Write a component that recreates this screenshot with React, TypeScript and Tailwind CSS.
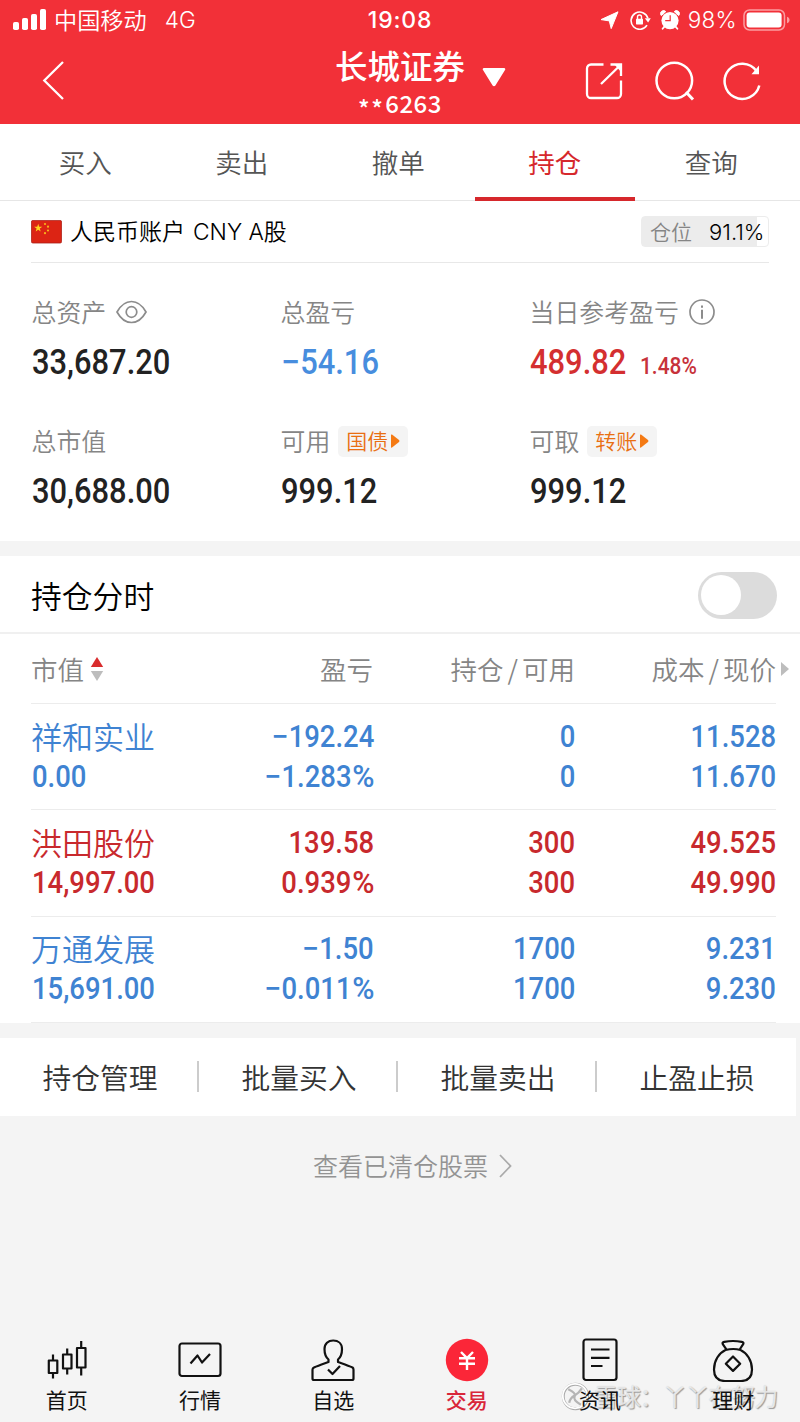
import React from "react";

const CJK = "font-['Noto_Sans_CJK_SC',sans-serif]";
const NUM = "inline-block whitespace-nowrap font-['Roboto',sans-serif] font-medium";

type Tone = "blue" | "red";

interface Holding {
  name: string;
  value: string;
  profit: string;
  rate: string;
  held: string;
  usable: string;
  cost: string;
  price: string;
  tone: Tone;
}

const holdings: Holding[] = [
  { name: "祥和实业", value: "0.00", profit: "−192.24", rate: "−1.283%", held: "0", usable: "0", cost: "11.528", price: "11.670", tone: "blue" },
  { name: "洪田股份", value: "14,997.00", profit: "139.58", rate: "0.939%", held: "300", usable: "300", cost: "49.525", price: "49.990", tone: "red" },
  { name: "万通发展", value: "15,691.00", profit: "−1.50", rate: "−0.011%", held: "1700", usable: "1700", cost: "9.231", price: "9.230", tone: "blue" },
];

const tabs = ["买入", "卖出", "撤单", "持仓", "查询"];
const actions = ["持仓管理", "批量买入", "批量卖出", "止盈止损"];

function StatusBar() {
  return (
    <div className="grid h-10 grid-cols-[1fr_auto_1fr] items-center text-white">
      <div className="flex items-center pl-[13px]">
        <svg width="33" height="21" viewBox="0 0 33 21" fill="currentColor" className="-translate-y-px">
          <rect x="0" y="13" width="6" height="8" rx="1.8" />
          <rect x="9" y="9" width="6" height="12" rx="1.8" />
          <rect x="18" y="5" width="6" height="16" rx="1.8" />
          <rect x="27" y="0" width="6" height="21" rx="1.8" />
        </svg>
        <span className="ml-[8px] -translate-y-px text-[23.2px] leading-10 font-[350]">中国移动</span>
        <span className="ml-[18px] font-['Inter',sans-serif] text-[22.5px] leading-10 font-light">4G</span>
      </div>
      <span className="font-['Inter',sans-serif] text-[23px] leading-10 font-medium tracking-[0.8px]">19:08</span>
      <div className="flex items-center justify-end pr-[10px]">
        <svg width="19" height="19" viewBox="0 0 19 19" fill="currentColor" className="mr-[11px]">
          <path d="M18 .8 11.2 17.6 9.3 9.9 1 8.6Z" stroke="currentColor" strokeLinejoin="round" />
        </svg>
        <svg width="21" height="20" viewBox="0 0 21 20" fill="none" stroke="currentColor" strokeWidth="1.6" className="mr-[9px]">
          <path d="M17 15.2A8.6 8.6 0 1 1 17.9 8.2" />
          <path d="M14.8 8.2h6l-2.7 4.3Z" fill="currentColor" stroke="none" />
          <rect x="6" y="8.8" width="7" height="5.6" rx=".6" fill="currentColor" stroke="none" />
          <path d="M7.5 9V7a2 2 0 0 1 4 0v2" strokeWidth="1.4" />
        </svg>
        <svg width="20" height="20" viewBox="0 0 20 20" className="mr-[8px]">
          <circle cx="10" cy="10.6" r="8.6" fill="white" />
          <path d="M1.3 5.6A3 3 0 0 1 5.8 1.6ZM18.7 5.6A3 3 0 0 0 14.2 1.6Z" fill="white" stroke="white" strokeLinejoin="round" />
          <path d="m4.4 16.6-1.8 2.2M15.6 16.6l1.8 2.2" stroke="white" strokeWidth="1.8" strokeLinecap="round" />
          <path d="M10.2 5.3v5.4H5.2" stroke="#f23038" strokeWidth="1.2" fill="none" />
        </svg>
        <span className="font-['Inter',sans-serif] text-[22.5px] leading-10 font-light tracking-[0.3px]">98%</span>
        <svg width="47" height="22" viewBox="0 0 47 22" className="ml-[6px]">
          <rect x="1" y="1" width="40.5" height="20" rx="5.5" fill="none" stroke="#fb9da0" strokeWidth="1.5" />
          <rect x="3.6" y="3.6" width="35" height="14.8" rx="3" fill="white" />
          <path d="M44 7.8c3.4 1 3.4 5.4 0 6.4Z" fill="#fb9da0" />
        </svg>
      </div>
    </div>
  );
}

function Header() {
  return (
    <header className="h-[124px] bg-[#f23038]">
      <StatusBar />
      <div className="flex h-[82px] items-center text-white">
        <svg width="22" height="40" viewBox="0 0 22 40" fill="none" stroke="white" strokeWidth="2.3" className="ml-[42px] -translate-y-px">
          <path d="M21 2 2.3 20.5 21 39" />
        </svg>
        <div className="ml-[271px] flex w-[130px] -translate-y-px flex-col items-center">
          <span className="text-[32.5px] leading-[48px] font-medium whitespace-nowrap">长城证券</span>
          <span className="-mt-[3px] text-[24px] leading-[34px] font-medium tracking-[0.5px]">
            <span className="mr-px inline-block translate-y-[5px] tracking-[1.5px]">**</span>6263
          </span>
        </div>
        <svg width="24" height="20" viewBox="0 0 24 20" fill="white" className="ml-[17px] -translate-y-[4px]">
          <path d="M2 1h20a1.2 1.2 0 0 1 1 2L13.4 18.5a1.6 1.6 0 0 1-2.8 0L1 3A1.2 1.2 0 0 1 2 1Z" />
        </svg>
        <svg width="38" height="38" viewBox="0 0 38 38" fill="none" stroke="white" strokeWidth="2.3" className="ml-[79px]">
          <path d="M18.5 2.5H6A4 4 0 0 0 2 6.5V32a4 4 0 0 0 4 4h26a4 4 0 0 0 4-4V18.5" />
          <path d="M25.5 2.5H36V14M36 2.500 16 22" />
          <path d="M29 2h7.500v8.500Z" fill="white" stroke="none" />
        </svg>
        <svg width="40" height="40" viewBox="0 0 40 40" fill="none" stroke="white" strokeWidth="2.5" className="ml-[32px]">
          <circle cx="19.3" cy="19.5" r="17.8" />
          <path d="m31 31 7 7.5" strokeWidth="3" />
        </svg>
        <svg width="38" height="40" viewBox="0 0 38 40" fill="none" stroke="white" strokeWidth="2.5" className="ml-[28px]">
          <path d="M36.3 24.5A17.6 17.6 0 1 1 33.5 10" />
          <path d="M36 4.5v8.700h-7.500Z" fill="white" stroke="none" />
        </svg>
      </div>
    </header>
  );
}

function Tabs() {
  return (
    <nav className="flex h-[77px] border-b border-[#e6e6e6] pl-[7px]">
      {tabs.map((t) => (
        <div
          key={t}
          className={
            t === "持仓"
              ? "-mx-[1.75px] -mb-px flex w-[160px] justify-center border-b-4 border-[#d6282c] pt-[18px] text-[26.5px] leading-[40px] text-[#d6282c]"
              : "flex w-[156.5px] justify-center pt-[18px] text-[26.5px] leading-[40px] font-[350] text-[#555]"
          }
        >
          {t}
        </div>
      ))}
    </nav>
  );
}

function Flag() {
  return (
    <svg width="31" height="24" viewBox="0 0 31 24">
      <rect x=".4" y=".4" width="30.2" height="22.6" rx="1.5" fill="#dc2414" stroke="#a91f17" strokeWidth=".8" />
      <path d="m7.2 3.7 1 3h3.100L8.800 8.500l.9 3-2.500-1.800-2.500 1.800.9-3L3.100 6.700h3.100Z" fill="#ffd21f" />
      <g fill="#f8b51c">
        <circle cx="14" cy="4" r="1.1" />
        <circle cx="17" cy="6.7" r="1.1" />
        <circle cx="17" cy="10.5" r="1.1" />
        <circle cx="14" cy="13.2" r="1.1" />
      </g>
    </svg>
  );
}

function LinkTag({ text }: { text: string }) {
  return (
    <span className="ml-[8px] flex h-[31px] w-[70px] items-center rounded-[5px] bg-[#f4f4f4] pl-[8px] text-[21px] font-[350] text-[#e96f12]">
      <span className="-translate-y-px leading-[30px] whitespace-nowrap">{text}</span>
      <svg width="9" height="14" viewBox="0 0 9 14" fill="#f47a14" className="ml-[3px] shrink-0">
        <path d="M0 1Q0 0 1 .600L8 6Q9 7 8 8L1 13.400Q0 14 0 13Z" />
      </svg>
    </span>
  );
}

function Stat({ label, extra, children }: { label: string; extra?: React.ReactNode; children: React.ReactNode }) {
  return (
    <div>
      <div className="flex h-[36px] items-center text-[24.9px] leading-[36px] font-[350] text-[#858585]">
        <span className="-translate-y-px whitespace-nowrap">{label}</span>
        {extra}
      </div>
      <div className="mt-[10px] flex h-[44px] items-center leading-[44px]">{children}</div>
    </div>
  );
}

const big = `${NUM} origin-left scale-x-[0.895] text-[34.5px]`;

function Account() {
  return (
    <section className="h-[340px] px-[31px]">
      <div className="flex h-[62px] items-center justify-between border-b border-[#e8e8e8]">
        <div className="flex items-center">
          <Flag />
          <span className="ml-[8px] -translate-y-px text-[23px] leading-[34px] font-[350] text-black">
            人民币账户<span className="ml-[8px] font-['Inter',sans-serif] text-[22.8px] font-light">CNY A</span>股
          </span>
        </div>
        <div className="flex h-[31px] w-[128px] items-center rounded-[4px] border border-[#ececec] bg-[linear-gradient(to_right,#ececec_91%,#fff_91%)] pl-[8px]">
          <span className="-translate-y-px text-[21px] leading-[28px] font-[350] text-[#858585]">仓位</span>
          <span className="ml-[17px] font-['Inter',sans-serif] text-[22px] leading-[28px] font-light text-black">91.1%</span>
        </div>
      </div>
      <div className="grid grid-cols-[249px_249px_240px] gap-y-[39px] pt-[31px] pl-[0.5px]">
        <Stat
          label="总资产"
          extra={
            <svg width="31" height="24" viewBox="0 0 31 24" fill="none" stroke="#8c8c8c" strokeWidth="1.7" className="ml-[10px]">
              <path d="M1 12C5 4.800 10 1.500 15.500 1.500S26 4.800 30 12c-4 7.200-9 10.500-14.500 10.500S5 19.200 1 12Z" />
              <circle cx="15.5" cy="12" r="5.3" />
            </svg>
          }
        >
          <span className={`${big} text-[#222]`}>33,687.20</span>
        </Stat>
        <Stat label="总盈亏">
          <span className={`${big} text-[#478dde]`}>
            <span className="mr-[2px] inline-block origin-left scale-x-[1.1]">−</span>54.16
          </span>
        </Stat>
        <Stat
          label="当日参考盈亏"
          extra={
            <svg width="26" height="26" viewBox="0 0 26 26" fill="none" stroke="#8c8c8c" strokeWidth="1.7" className="ml-[10px]">
              <circle cx="13" cy="13" r="12" />
              <path d="M13 10.800v9M13 6.500v2.200" strokeWidth="2" />
            </svg>
          }
        >
          <span className={`${big} w-[110px] text-[#d42f30]`}>489.82</span>
          <span className={`${NUM} origin-left translate-y-[4px] scale-x-[0.87] text-[24px] text-[#c7323a]`}>1.48%</span>
        </Stat>
        <Stat label="总市值">
          <span className={`${big} text-[#222]`}>30,688.00</span>
        </Stat>
        <Stat label="可用" extra={<LinkTag text="国债" />}>
          <span className={`${big} text-[#222]`}>999.12</span>
        </Stat>
        <Stat label="可取" extra={<LinkTag text="转账" />}>
          <span className={`${big} text-[#222]`}>999.12</span>
        </Stat>
      </div>
    </section>
  );
}

const numLeft = `${NUM} origin-left scale-x-[0.9] text-[30.5px]`;
const numRight = `${NUM} origin-right scale-x-[0.9] text-[30.5px]`;
const columns = "grid grid-cols-[160px_183px_201px_201px]";

function Signed({ text }: { text: string }) {
  const negative = text.startsWith("−");
  const percent = text.endsWith("%");
  const digits = text.replace(/[−%]/g, "");
  return (
    <span className={numRight}>
      {negative && <span className="mr-[2px] inline-block origin-left scale-x-[1.1]">−</span>}
      {digits}
      {percent && <span className="ml-[3px] inline-block origin-right scale-x-[1.1]">%</span>}
    </span>
  );
}

function HoldingRow({ h }: { h: Holding }) {
  return (
    <div
      className={
        h.tone === "blue"
          ? `${columns} h-[106.3px] border-b border-[#ececec] pt-[12.5px] text-[#3f83d2]`
          : `${columns} h-[106.3px] border-b border-[#ececec] pt-[12.5px] text-[#c8292d]`
      }
    >
      <div className="flex flex-col items-start leading-[40.3px]">
        <span className="-translate-y-px text-[31px] font-[350]">{h.name}</span>
        <span className={`${numLeft} translate-x-px`}>{h.value}</span>
      </div>
      <div className="flex flex-col items-end leading-[40.3px]">
        <Signed text={h.profit} />
        <Signed text={h.rate} />
      </div>
      <div className="flex flex-col items-end leading-[40.3px]">
        <span className={numRight}>{h.held}</span>
        <span className={numRight}>{h.usable}</span>
      </div>
      <div className="flex flex-col items-end leading-[40.3px]">
        <span className={numRight}>{h.cost}</span>
        <span className={numRight}>{h.price}</span>
      </div>
    </div>
  );
}

function Holdings() {
  return (
    <section>
      <div className="flex h-[78px] items-center justify-between border-b-2 border-[#f0f0f0] pt-[2px] pr-[23px] pl-[31px]">
        <span className="text-[30.8px] leading-[46px] font-[350] text-black">持仓分时</span>
        <div className="flex h-[47px] w-[79px] items-center rounded-full bg-[#dcdcdc] pl-[3px]">
          <div className="size-[40px] rounded-full bg-white" />
        </div>
      </div>
      <div className="pr-[24px] pl-[31px]">
        <div className={`${columns} h-[70px] items-center border-b border-[#ececec] text-[26.5px] leading-[40px] font-[350] text-[#858585]`}>
          <div className="flex items-center">
            市值
            <svg width="14" height="26" viewBox="0 0 14 26" className="ml-[6px]">
              <path d="M7 1 13.200 11H.8Z" fill="#d92c2d" />
              <path d="M7 25 13.200 15H.8Z" fill="#bdbdbd" />
            </svg>
          </div>
          <span className="pr-px text-right">盈亏</span>
          <span className="text-right">持仓<span className="mx-[4px]">/</span>可用</span>
          <div className="-mr-[13px] flex items-center justify-end">
            <span>成本<span className="mx-[4px]">/</span>现价</span>
            <svg width="8" height="14" viewBox="0 0 8 14" fill="#bdbdbd" className="ml-[5px]">
              <path d="M0 0 8 7 0 14Z" />
            </svg>
          </div>
        </div>
        {holdings.map((h) => (
          <HoldingRow key={h.name} h={h} />
        ))}
      </div>
    </section>
  );
}

const ink = { fill: "none", stroke: "#111", strokeWidth: 2.2, strokeLinejoin: "round" as const };

const navItems: { label: string; active?: boolean; icon: React.ReactNode }[] = [
  {
    label: "首页",
    icon: (
      <svg width="44" height="44" viewBox="0 0 44 44" {...ink}>
        <path d="M3.800 22.500h8.500v12.500h-8.500ZM8 16.500v6M8 35V40.500M18 16.500h8.500v14H18ZM22.200 10.500v6M22.200 30.500v6M32 10h8.500v19.500H32ZM36.200 3v7M36.200 29.500v8" />
      </svg>
    ),
  },
  {
    label: "行情",
    icon: (
      <svg width="44" height="44" viewBox="0 0 44 44" {...ink}>
        <rect x="1.5" y="5.5" width="41" height="32.5" rx="2.5" />
        <path d="m12.500 25.500 7-8 4.500 7 8-8.500" />
      </svg>
    ),
  },
  {
    label: "自选",
    icon: (
      <svg width="44" height="44" viewBox="0 0 44 44" {...ink}>
        <path d="M17.500 21.500C14.500 19 13.500 15.500 13.500 11c0-5.500 3.700-8.500 8.700-8.500s8.800 3 8.800 8.500c0 4.500-1 8-4 10.500v2.500c5.500 2 10 3.500 14.500 5.500q1 .7 1 2.300v8.700q0 1.500-1.500 1.500h-38q-1.500 0-1.500-1.500v-8.700q0-1.600 1.500-2.300c4.500-2 9-3.500 14.500-5.500Z" />
        <path d="m17 31.500 4.500 4.500 7.500-8" />
      </svg>
    ),
  },
  {
    label: "交易",
    active: true,
    icon: (
      <svg width="44" height="44" viewBox="0 0 44 44" fill="none" stroke="white" strokeWidth="2.4">
        <circle cx="22" cy="22" r="21.2" fill="#fb2638" stroke="none" />
        <path d="m16 14 6 6.200 6-6.200M14 20.300h16M14 25.800h16M22 20v12" />
      </svg>
    ),
  },
  {
    label: "资讯",
    icon: (
      <svg width="44" height="44" viewBox="0 0 44 44" {...ink}>
        <rect x="5.5" y="1.5" width="33" height="40.5" rx="2.5" />
        <path d="M13 11.500h18.500M13 19.800h18.500M13 28h11.500" />
      </svg>
    ),
  },
  {
    label: "理财",
    icon: (
      <svg width="44" height="44" viewBox="0 0 44 44" {...ink}>
        <path d="M14.500 12C8 15 3 22.500 3 31.500c0 8 3.500 11.500 11 11.500h16c7.500 0 11-3.500 11-11.500 0-9-5-16.500-11.500-19.500q-7-2-15 0ZM15.500 11.500c-1-1.500-2.500-3.500-3.700-5.300q-.8-2 1.400-2.400 8.800-1.600 17.600 0 2.200.4 1.400 2.400c-1.200 1.800-2.500 3.800-3.500 5.300" />
        <path d="m22 18.500 7.200 7.200L22 32.900l-7.200-7.200Z" />
      </svg>
    ),
  },
];

function Watermark() {
  return (
    <div className="absolute top-[47px] left-[561px] flex items-center text-[24px] leading-[38px] whitespace-nowrap text-white/70 [text-shadow:1px_1px_1px_#999,0_0_1px_#bbb]">
      <svg width="29" height="29" viewBox="0 0 32 32" fill="none" className="mr-[4px]">
        <circle cx="16" cy="16" r="13.5" stroke="#aaa" strokeWidth="3.2" />
        <circle cx="15.5" cy="15.5" r="13.5" stroke="#fff" strokeWidth="2" />
        <path d="M8 8q9 4 7 8t7 9M23 7q-3 5-8 8t-6 8" stroke="#b5b5b5" strokeWidth="2.5" />
      </svg>
      <span className="tracking-[-1.1px]">雪球：丫丫在努力</span>
    </div>
  );
}

function BottomNav() {
  return (
    <footer className="relative mt-auto h-[92px]">
      <Watermark />
      <div className="relative grid h-full grid-cols-6">
        {navItems.map((n) => (
          <div key={n.label} className="flex flex-col items-center pt-[8px]">
            {n.icon}
            <span
              className={
                n.active
                  ? "mt-[2px] text-[21px] leading-[30px] font-medium text-[#d9263a]"
                  : "mt-[2px] text-[21px] leading-[30px] text-[#111]"
              }
            >
              {n.label}
            </span>
          </div>
        ))}
      </div>
    </footer>
  );
}

export default function App() {
  return (
    <div className={`${CJK} flex h-[1422px] w-[800px] flex-col overflow-hidden bg-[#f4f4f4]`}>
      <Header />
      <div className="bg-white">
        <Tabs />
        <Account />
      </div>
      <div className="mt-[15px] bg-white">
        <Holdings />
      </div>
      <div className="mt-[15px] flex h-[78px] w-[796px] items-center bg-white">
        {actions.map((a, i) => (
          <div
            key={a}
            className={
              i < actions.length - 1
                ? "flex h-[31px] w-[199px] items-center justify-center border-r-2 border-[#ccc] pl-[3px] text-[28.8px] leading-[40px] font-[350] text-[#333]"
                : "flex h-[31px] w-[199px] items-center justify-center pl-px text-[28.8px] leading-[40px] font-[350] text-[#333]"
            }
          >
            {a}
          </div>
        ))}
      </div>
      <div className="mt-[31px] flex items-center justify-center pl-[25px] text-[25px] leading-[36px] font-[350] text-[#939393]">
        查看已清仓股票
        <svg width="13" height="24" viewBox="0 0 13 24" fill="none" stroke="#aaa" strokeWidth="1.8" className="ml-[11px] translate-y-px">
          <path d="m1 1 10.500 11L1 23" />
        </svg>
      </div>
      <BottomNav />
    </div>
  );
}
